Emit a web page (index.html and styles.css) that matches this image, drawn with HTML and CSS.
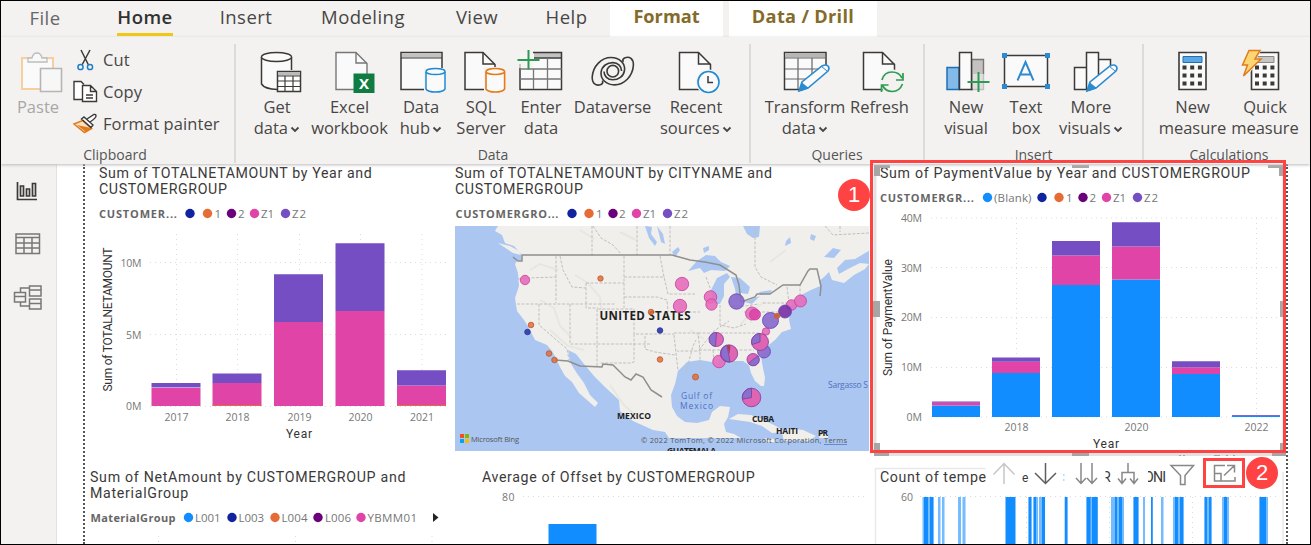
FILE: index.html
```html
<!DOCTYPE html>
<html lang="en">
<head>
<meta charset="utf-8">
<title>Report</title>
<link rel="stylesheet" href="styles.css">
</head>
<body>
<div class="app">
<nav class="tabs">
  <span class="tab t-file">File</span><span class="tab t-home active"><b>Home</b></span><span class="tab t-insert">Insert</span><span class="tab t-model">Modeling</span><span class="tab t-view">View</span><span class="tab t-help">Help</span><span class="tab context t-format">Format</span><span class="tab context t-drill">Data / Drill</span>
</nav>
<div class="ribbon">
  <section class="group g-clip">
    <div class="tools">
      <div class="btn b-paste disabled">
        <svg class="ico" viewBox="16 50 44 44"><path d="M22 58h31v31H22z" fill="#fafafa" stroke="#f5cfa0" stroke-width="2"/><path d="M28 62v-4h4q1-5 5-5t5 5h5v4z" fill="#f8f8f8" stroke="#bdbdbd" stroke-width="1.3"/><path d="M40.500 68.500h21v23h-21z" fill="#f7f7f7" stroke="#b5b5b5" stroke-width="1.600"/></svg>
        <span>Paste</span>
      </div>
      <ul class="mini">
        <li><svg viewBox="73 48 26 24"><path d="M81 51l7.500 15M90 51l-8 15" fill="none" stroke="#3b3a39" stroke-width="1.500"/><circle cx="80.500" cy="68" r="2.600" fill="none" stroke="#1e7fc4" stroke-width="1.500"/><circle cx="90" cy="68" r="2.600" fill="none" stroke="#1e7fc4" stroke-width="1.500"/></svg>Cut</li>
        <li><svg viewBox="73 80 26 24"><path d="M82 100.500h-8v-18h7l3 3" fill="#fff" stroke="#3b3a39" stroke-width="1.400"/><path d="M82.500 86.500h8l6 6v10h-14zM90.500 86.500v6h6M86 96h7M86 99h7" fill="#fff" stroke="#3b3a39" stroke-width="1.400"/></svg>Copy</li>
        <li><svg viewBox="73 112 26 24"><path d="M74 125l8.500-3.500 9 8-7 4z" fill="#fbe0c0" stroke="#e07c1c" stroke-width="1.500"/><path d="M77 126l9 7 5-4" fill="#e07c1c"/><path d="M81.500 120l2.500-2 9 8-2 2.500zM87 120l7-4.500q2-.5 2 1.500t-6 6" fill="#fff" stroke="#3b3a39" stroke-width="1.400"/></svg>Format painter</li>
      </ul>
    </div>
    <div class="caption">Clipboard</div>
  </section>
  <section class="group g-data">
    <div class="tools">
      <div class="btn w72"><svg class="ico" viewBox="255 50 44 44"><path d="M262 57v27q3 5 16 5h13V57z" fill="#fafafa"/><path d="M261.500 57v27q3 5 16 5.500M291.500 57v13" fill="none" stroke="#3b3a39" stroke-width="1.500"/><ellipse cx="276.500" cy="57" rx="15" ry="4.500" fill="#fafafa" stroke="#3b3a39" stroke-width="1.500"/><path d="M277.500 71.500h23v20h-23z" fill="#fff" stroke="#3b3a39" stroke-width="1.500"/><path d="M278 72h22v3.500h-22z" fill="#bbb"/><path d="M278 76h23M278 81h23M278 86.500h23M285 76v15M293 76v15" stroke="#3b3a39" stroke-width="1.200"/></svg><span>Get<br>data <svg class="chev" viewBox="0 0 10 7"><path d="M1.500 1.500L5 5l3.500-3.500"/></svg></span></div>
      <div class="btn w73"><svg class="ico" viewBox="327.500 50 44 44"><path d="M335.500 52.500h20l11 11v26h-31z" fill="#fafafa" stroke="#777" stroke-width="1.400"/><path d="M355.500 52.500v10.500h11" fill="none" stroke="#777" stroke-width="1.400"/><path d="M353 73.500h21v19.500h-21z" fill="#107c41"/><text x="363.500" y="88.500" text-anchor="middle" class="xl">X</text></svg><span>Excel<br>workbook</span></div>
      <div class="btn w70"><svg class="ico" viewBox="399 50 44 44"><path d="M401 52.500h41v37h-41z" fill="#fafafa" stroke="#3b3a39" stroke-width="1.500"/><path d="M402 53.500h39v4h-39z" fill="#c4c2c0"/><path d="M401 58h41" stroke="#3b3a39" stroke-width="1.200"/><path d="M424 68h23v25h-23z" fill="#f3f2f1"/><path d="M426 72v17q2 3 9.500 3t9.500-3V72" fill="#fafafa" stroke="#1e8ad6" stroke-width="1.500"/><ellipse cx="435.500" cy="71.500" rx="9.500" ry="3" fill="#fafafa" stroke="#1e8ad6" stroke-width="1.500"/></svg><span>Data<br>hub <svg class="chev" viewBox="0 0 10 7"><path d="M1.500 1.500L5 5l3.500-3.500"/></svg></span></div>
      <div class="btn w50"><svg class="ico" viewBox="459 50 44 44"><path d="M465 52.500h18l12 12v25h-30z" fill="#fafafa" stroke="#3b3a39" stroke-width="1.500"/><path d="M483 52.500V64h12" fill="none" stroke="#3b3a39" stroke-width="1.500"/><path d="M484 67h23v26h-23z" fill="#f3f2f1"/><path d="M486 72v17q2 3 9.300 3t9.300-3V72" fill="#fafafa" stroke="#e67a17" stroke-width="1.600"/><ellipse cx="495.300" cy="71.500" rx="9.300" ry="3" fill="#fafafa" stroke="#e67a17" stroke-width="1.600"/></svg><span>SQL<br>Server</span></div>
      <div class="btn w70"><svg class="ico" viewBox="519 50 44 44"><path d="M520 52.500h41.500v37H520z" fill="#fafafa"/><path d="M534 53h27v4.500h-27z" fill="#c4c2c0"/><path d="M533 52.500h28.500v37H520V64M534 58h27" fill="none" stroke="#3b3a39" stroke-width="1.500"/><path d="M520 69h41.500M520 79h41.500M533.500 69v20M547.500 58v31" stroke="#777" stroke-width="1.300"/><path d="M516 49h17v19h-17z" fill="#f3f2f1" opacity=".7"/><path d="M528.500 50v19.500M517.500 60h22" stroke="#2d9b52" stroke-width="2"/></svg><span>Enter<br>data</span></div>
      <div class="btn w73"><svg class="ico" viewBox="590.500 50 44 44"><g fill="none" stroke="#3b3a39" stroke-width="1.600"><path id="swirl" d="M602 80.500Q603 83.500 600.500 84.500C595.500 86.500 591.500 83.500 591.700 77 592.500 66 601 57.500 610.500 57.500 619 57.500 625 63.500 624 70.500 623 76.500 618 79.800 612.300 79.800 607 79.800 603.500 76 603.500 71.500"/><use href="#swirl" transform="rotate(180 612.300 71.200)"/><circle cx="612.300" cy="71.200" r="5.800"/></g></svg><span>Dataverse</span></div>
      <div class="btn w94"><svg class="ico" viewBox="674 50 44 44"><path d="M679.500 52.500h19l12 12v25h-31z" fill="#fafafa" stroke="#3b3a39" stroke-width="1.500"/><path d="M698.500 52.500V64h12" fill="none" stroke="#3b3a39" stroke-width="1.500"/><circle cx="708.500" cy="82" r="12.500" fill="#f3f2f1"/><circle cx="708.500" cy="82" r="10.500" fill="#fafafa" stroke="#1e8ad6" stroke-width="1.600"/><path d="M708 76v6.500h5" fill="none" stroke="#3b3a39" stroke-width="1.500"/></svg><span>Recent<br>sources <svg class="chev" viewBox="0 0 10 7"><path d="M1.500 1.500L5 5l3.500-3.500"/></svg></span></div>
    </div>
    <div class="caption">Data</div>
  </section>
  <section class="group g-query">
    <div class="tools">
      <div class="btn w80"><svg class="ico" viewBox="783 50 44 44"><path d="M784.500 52.500h41.500v37h-41.500z" fill="#fafafa" stroke="#3b3a39" stroke-width="1.500"/><path d="M785 53h40v4.500h-40z" fill="#b8b6b4"/><path d="M785 58h41M785 69h41M785 79h41M798 58v31M812 58v31" stroke="#666" stroke-width="1.200"/><path d="M801 93l30-32v30z" fill="#f3f2f1"/><path d="M799 91l3-9 20-16q4-2 6 0t0 5l-20 17z" fill="#fafafa" stroke="#2c8ad0" stroke-width="1.600"/><path d="M799 91l3-8 6 5zM821 66l6 5" fill="#2c8ad0" stroke="#2c8ad0"/></svg><span>Transform<br>data <svg class="chev" viewBox="0 0 10 7"><path d="M1.500 1.500L5 5l3.500-3.500"/></svg></span></div>
      <div class="btn w69"><svg class="ico" viewBox="857.500 50 44 44"><path d="M863 52.500h19l12 12v25h-31z" fill="#fafafa" stroke="#3b3a39" stroke-width="1.500"/><path d="M882 52.500V64h12" fill="none" stroke="#3b3a39" stroke-width="1.500"/><circle cx="892" cy="82" r="12.500" fill="#f3f2f1"/><path d="M881.500 80q2-8 10-8 7 0 10 6M902.500 73v7h-7M902 84q-3 7.500-10 7.500-7 0-10-6M881 92v-7h7" fill="none" stroke="#2d9b52" stroke-width="1.700"/></svg><span>Refresh</span></div>
    </div>
    <div class="caption">Queries</div>
  </section>
  <section class="group g-insert">
    <div class="tools">
      <div class="btn w60"><svg class="ico" viewBox="944 50 44 44"><path d="M971.500 59.500h12v30h-12z" fill="#c4c2c0" stroke="#777" stroke-width="1.400"/><path d="M947 67.500h12v22h-12z" fill="#82baea" stroke="#1e70b5" stroke-width="1.500"/><path d="M959.500 52.500h12v37h-12z" fill="#fafafa" stroke="#3b3a39" stroke-width="1.500"/><path d="M973 74h14v17h-14z" fill="#f3f2f1" opacity=".6"/><path d="M978.500 72v20M967.500 82h22" stroke="#2d9b52" stroke-width="2"/></svg><span>New<br>visual</span></div>
      <div class="btn w60"><svg class="ico" viewBox="1004 50 44 44"><path d="M1004.500 55.500h43v31h-43z" fill="#fafafa" stroke="#3b3a39" stroke-width="1.500"/><path d="M1002 53h5v5h-5zM1045 53h5v5h-5zM1002 84h5v5h-5zM1045 84h5v5h-5z" fill="#2c8ad0"/><path d="M1017.500 80.500L1025.500 62l8 18.500M1020 74.500h11" fill="none" stroke="#2c8ad0" stroke-width="1.900"/></svg><span>Text<br>box</span></div>
      <div class="btn w70"><svg class="ico" viewBox="1069 50 44 44"><path d="M1074.500 67.500h12v22h-12zM1098.500 59.500h12v30h-12zM1086.500 52.500h12v37h-12z" fill="#fafafa" stroke="#3b3a39" stroke-width="1.500"/><path d="M1088 94l26-30v28z" fill="#f3f2f1"/><path d="M1087 91l3-9 20-16q4-2 6 0t0 5l-20 17z" fill="#fafafa" stroke="#2c8ad0" stroke-width="1.600"/><path d="M1087 91l3-8 6 5zM1109 66l6 5" fill="#2c8ad0" stroke="#2c8ad0"/></svg><span>More<br>visuals <svg class="chev" viewBox="0 0 10 7"><path d="M1.500 1.500L5 5l3.500-3.500"/></svg></span></div>
    </div>
    <div class="caption">Insert</div>
  </section>
  <section class="group g-calc">
    <div class="tools">
      <div class="btn w73"><svg class="ico" viewBox="1170.500 50 44 44"><path d="M1178.500 52.500h27v37h-27z" fill="#fafafa" stroke="#3b3a39" stroke-width="1.600"/><path d="M1182.500 56.500h19v6h-19z" fill="#5ba7e6" stroke="#1e70b5"/><path d="M1182 67.500h19.500M1182 75.500h19.500M1182 83.500h19.500" stroke="#3b3a39" stroke-width="4" stroke-dasharray="4 3.700"/></svg><span>New<br>measure</span></div>
      <div class="btn w72"><svg class="ico" viewBox="1243 50 44 44"><path d="M1251.500 52.500h27v37h-27z" fill="#fafafa" stroke="#3b3a39" stroke-width="1.600"/><path d="M1256 56.500h18v6h-18z" fill="#c8c6c4" stroke="#888"/><path d="M1255 67.500h19.500M1255 75.500h19.500M1255 83.500h19.500" stroke="#3b3a39" stroke-width="4" stroke-dasharray="4 3.700"/><path d="M1240 49h22l-5 9h4l-13 17h-8z" fill="#f3f2f1"/><path d="M1249 50.500h11l-5 8.500h6L1243.500 76l4-11h-5z" fill="#fcd575" stroke="#e07c1c" stroke-width="1.500"/></svg><span>Quick<br>measure</span></div>
    </div>
    <div class="caption">Calculations</div>
  </section>
</div>
<div class="work">
  <aside class="rail">
    <svg viewBox="14 180 28 20"><path d="M17.500 182v17.500H37M20.500 186h3v10h-3zM26.500 189h3v7h-3zM32.500 183.500h3v12.500h-3z" fill="none" stroke="#3b3a39" stroke-width="1.700"/></svg>
    <svg viewBox="14 232 28 22"><path d="M16 234h23.500v19.500H16zM16 237.500h23.500M16 243h23.500M16 248h23.500M24 237v16M32 237v16" fill="none" stroke="#777" stroke-width="1.500"/></svg>
    <svg viewBox="14 284 28 28"><path d="M14.500 292.500h11v9.500h-11zM14.500 296.500h11M29.500 286h11.500v10H29.500zM29.500 290h11.500M29.500 299h11.500v10H29.500zM29.500 303.500h11.500M20.500 292v-4h9M20.500 302v4h9" fill="none" stroke="#777" stroke-width="1.500"/></svg>
  </aside>
  <main class="page">
    <div class="row top">
      <article class="card c1">
        <h2>Sum of TOTALNETAMOUNT by Year and<br>CUSTOMERGROUP</h2>
        <svg class="chart" viewBox="99 198 350 244">
          <g class="legend"><text x="99" y="217.500" textLength="78" class="lb">CUSTOMER...</text><circle cx="190" cy="213.500" r="4.700" fill="#12239e"/><circle cx="207.500" cy="213.500" r="4.700" fill="#e66c37"/><text x="214.500" y="217.500">1</text><circle cx="231.500" cy="213.500" r="4.700" fill="#6b007b"/><text x="238" y="217.500">2</text><circle cx="254.500" cy="213.500" r="4.700" fill="#e044a7"/><text x="261" y="217.500" textLength="13">Z1</text><circle cx="285.500" cy="213.500" r="4.700" fill="#744ec2"/><text x="292" y="217.500" textLength="14">Z2</text></g>
          <path class="grid" d="M150 262.500h298M150 334.500h298M150 406.500h298M176.500 234v172M237.500 234v172M299.500 234v172M360.500 234v172M422 234v172"/>
          <g fill="#e044a7"><path d="M151.500 388h49v18h-49zM212.500 383h49v23h-49zM274 322h49v84h-49zM335.500 311h49v95h-49zM397 385.500h49v20.500h-49z"/></g>
          <g fill="#744ec2"><path d="M151.500 383h49v4.500h-49zM212.500 373.500h49v9.500h-49zM274 274.300h49v47.700h-49zM335.500 243.300h49v67.700h-49zM397 370.300h49v15.200h-49z"/></g>
          <path d="M212.500 405.500h49M397 405.500h49" stroke="#e66c37"/>
          <g class="ax"><text x="120.500" y="266.500" textLength="21">10M</text><text x="126" y="338.500" textLength="15.500">5M</text><text x="126" y="410" textLength="15.500">0M</text><g text-anchor="middle"><text x="176.500" y="420.500" textLength="24">2017</text><text x="237.500" y="420.500" textLength="24">2018</text><text x="299.500" y="420.500" textLength="24">2019</text><text x="360.500" y="420.500" textLength="24">2020</text><text x="422" y="420.500" textLength="24">2021</text></g></g>
          <text class="at" x="286" y="437.500" textLength="26">Year</text>
          <text class="at" transform="translate(111.500 391.500) rotate(-90)" textLength="144">Sum of TOTALNETAMOUNT</text>
        </svg>
      </article>
      <article class="card c2">
        <h2>Sum of TOTALNETAMOUNT by CITYNAME and<br>CUSTOMERGROUP</h2>
        <svg class="chart" viewBox="455 198 414 253">
          <g class="legend"><text x="455.500" y="217.500" textLength="103" class="lb">CUSTOMERGRO...</text><circle cx="572" cy="213.500" r="4.700" fill="#12239e"/><circle cx="589" cy="213.500" r="4.700" fill="#e66c37"/><text x="596" y="217.500">1</text><circle cx="613" cy="213.500" r="4.700" fill="#6b007b"/><text x="619" y="217.500">2</text><circle cx="636.500" cy="213.500" r="4.700" fill="#e044a7"/><text x="643" y="217.500" textLength="13">Z1</text><circle cx="667.500" cy="213.500" r="4.700" fill="#744ec2"/><text x="674" y="217.500" textLength="14">Z2</text></g>
          <svg x="455" y="226" width="414" height="225" viewBox="455 226 414 225">
            <path d="M455 226h414v225H455z" fill="#abc7f1"/>
            <g fill="#f0efeb">
              <path d="M498 226l-3 5 7 4 3 8 9 3 7 8 1 6-5 1-2 3 3 9 1 13-4 12 2 13 7 9 5 8 6 12 12 5 5 6 4 7 4 9 5 9 7 6 7 11 8 7 8 7 3-4-8-8-6-12-8-11-6-10-2-12 8 4 8 10 10 12 11 11 14 13 1 11 13 10 20 9 12 2 4 6h72l-7-4-8-2-2-8 4-7 2-10-10-1-8 6-3 8-12 3-12-1-8-6-5-9-1-12 4-11 3-13 9-9 13-2 12 2 6 3 1-5 6-2 9 3h9l6 4 2 8 4 8 6 5h3l1-8-2-10-2-11 4-9 10-8 7-8 9-3-2-9 2-14 10-11 10-5 9-4-1-5 5-4 5-5 3 8 12 3 10-8 11-6 4-5-9-1-12 6-9 5-2-6 8-8 10-1 17-10 22-10 9-5v-8z"/>
              <path d="M498 243l12 3 9 5 2 4-8-2z"/>
              <path d="M729 419l9-5 13 1 11 4 12 6 12 7-14 1-10-7-12-4-14-2zM782 433l7-5 14 2 13 6-8 5-12-1-12 1zM820 434h8v4h-9zM765 438l9 1 2 3h-9z"/>
            </g>
            <g fill="#abc7f1"><path d="M688 271l9-10 9-6 9 1 6 6 9 4-5 5-14-1-7 3-4-5zM714 304l-3-14 6-12 10-5 3 4-6 7v12l-4 8zM731 277l9 1 10 9-2 7-8-1-3 8-2-12zM744 302l16-6-8 8zM759 292l13-2-2 4-10 1zM743 226h17l-1 11-6 1-6-4zM645 226l7 1-1 7 6 8-2 4-6-8zM657 226l6 8 2 10-4-2zM672 252l6-5 2 3-5 7zM703 248l6-2v4l-5 3zM786 241l4-4 1 6-6 3zM811 234l5 2-2 5-4-2zM824 257l9-9 8 2-7 8z"/></g>
            <g fill="none" stroke="#e8e6e1" stroke-width="2"><path d="M540 300l14 8 6 18 12 12M575 275l13 8 12 14 2 17M550 330l18 16 16 4M530 270l10-6 18 6M610 385l14 20 16 14M580 230l14 9M620 232l16 8M690 330l14 9M740 325l14-15 10-8M770 262l16-12"/></g>
            <path class="state" d="M518 279l10-1 28-1v26M517 304h99M539 304v21l28 24 2 11M556 256v21M560 256l3 14 9 17 14 1M586 283h38M586 283v25h12M570 304v40h81M598 309h36M624 256v52M597 309v57M624 277h41M624 297h33l10 3 1 12M634 309v25h40M634 334v28l-4 1h-30M645 336v13l10 3 20 3M660 256l4 21 4 17h27M675 312h25M674 333h24l2 18h-23M674 335l4 36M686 372l7-26 3-6M593 226l8 12 12 7 9 10M592 226v30M637 226v29M670 226v28M755 228v39l6 10 16 8M700 352v22M713 350l2 22M728 349l7 17M698 333h65M699 350h55M699 350l15-19 15-10M720 305v20l14 3 12-4M732 306h13l14-2M744 312h37M751 300v23M763 303h23l4 13M787 287l2 16 8-4M800 284v17M706 277l6 16M825 226l8 9 36-2M840 226v6"/>
            <path d="M513 257l5 4h4v-6h150l18 5 15 2 15 3 16 10 3 10 2 17 14-5 2-3h13l13-9h17l8-14 2-2h7l4 17-1 10M555 360l13 1 12 5 22 1 1-3 10 1 12 12 6 3 5-6 7 3 8 13 11 7" fill="none" stroke="#8f8f8f" stroke-width="1.500"/>
            <g class="city"><text x="599.500" y="319.500" textLength="91" class="us">UNITED STATES</text><text x="617" y="418.500" textLength="34">MEXICO</text><text x="752" y="421.500" textLength="22">CUBA</text><text x="776" y="434" textLength="22">HAITI</text><text x="818" y="435.500" textLength="10">PR</text><text x="667" y="454" textLength="49">GUATEMALA</text></g>
            <g class="sea"><text x="681" y="398.500" textLength="31">Gulf of</text><text x="680" y="409" textLength="33">Mexico</text><text x="828" y="387.500" textLength="40">Sargasso S</text></g>
            <g fill="#e66c37" fill-opacity=".85" stroke="#b85a30" stroke-width=".8"><circle cx="600.500" cy="278.500" r="2.700"/><circle cx="531" cy="325" r="2.800"/><circle cx="549" cy="353.500" r="2.800"/><circle cx="554.500" cy="360" r="2.800"/><circle cx="651" cy="312" r="2.800"/><circle cx="660" cy="359.500" r="2.800"/><circle cx="695.500" cy="377" r="3"/></g>
            <g fill="#3b46b4" stroke="#2a3390" stroke-width=".8"><circle cx="527.500" cy="332" r="2.800"/><circle cx="660" cy="330.500" r="2.800"/></g>
            <g fill="#e66bbb" fill-opacity=".9" stroke="#c9409a" stroke-width=".8"><circle cx="525" cy="280" r="4.700"/><circle cx="682" cy="284" r="6.700"/><circle cx="680" cy="306" r="6.700"/><circle cx="710.500" cy="297" r="6.300"/><circle cx="711.500" cy="304.500" r="5.700"/><circle cx="752" cy="313.500" r="6.500"/><circle cx="755" cy="314.500" r="5.500" fill="#dc45a8"/><circle cx="791.500" cy="305" r="5.300"/><circle cx="800.500" cy="301" r="6"/><circle cx="766" cy="331.500" r="3.700"/><circle cx="719" cy="361.500" r="6.300"/></g>
            <g fill="#8a6acb" fill-opacity=".92" stroke="#6543b4" stroke-width=".8"><circle cx="736.500" cy="301.500" r="7.700"/><circle cx="770.500" cy="320.500" r="8"/><circle cx="785" cy="311.500" r="6.500" fill="#7933a5"/><circle cx="764" cy="351.500" r="6.500"/></g>
            <circle cx="777" cy="316" r="3" fill="#c9603f"/>
            <g stroke="#813b9c" stroke-width=".8"><g fill="#de65b4"><circle cx="716.500" cy="339.500" r="7"/><circle cx="729" cy="353.500" r="8.700"/><circle cx="760" cy="342" r="8.500"/><circle cx="753" cy="359.500" r="6"/><circle cx="751.500" cy="397.500" r="9.300"/></g><g fill="#8a6fce"><path d="M716.500 332.500a7 7 0 0 0-1 14zM727 345a8.700 8.700 0 0 0 3 17zM760 342v-8.500a8.500 8.500 0 0 0-8 11zM753 359.500l5-3.500a6 6 0 1 1-9.500 7.500zM751.500 397.500v-9.300a9.300 9.300 0 0 0-9 11z"/></g></g>
            <path d="M727 345.500l3.500-.5-1 9z" fill="#a83d4c"/>
            <path d="M460 434h4v4h-4z" fill="#f25022"/><path d="M465 434h4v4h-4z" fill="#7fba00"/><path d="M460 439h4v4h-4z" fill="#00a4ef"/><path d="M465 439h4v4h-4z" fill="#ffb900"/>
            <g class="credit"><text x="471" y="441.500" textLength="48">Microsoft Bing</text><text x="641" y="443" textLength="206">© 2022 TomTom, © 2022 Microsoft Corporation, Terms</text></g><path d="M824 444.500h23" stroke="#6688cc"/>
          </svg>
        </svg>
      </article>
      <article class="card c3">
        <h2>Sum of PaymentValue by Year and CUSTOMERGROUP</h2>
        <svg class="chart" viewBox="873 182 412 270">
          <g class="legend"><text x="880" y="202" textLength="94" class="lb">CUSTOMERGR...</text><circle cx="987.500" cy="197.500" r="4.700" fill="#118dff"/><text x="994" y="202" textLength="37.500">(Blank)</text><circle cx="1042" cy="197.500" r="4.700" fill="#12239e"/><circle cx="1059" cy="197.500" r="4.700" fill="#e66c37"/><text x="1066" y="202">1</text><circle cx="1083" cy="197.500" r="4.700" fill="#6b007b"/><text x="1089.500" y="202">2</text><circle cx="1106.500" cy="197.500" r="4.700" fill="#e044a7"/><text x="1113" y="202" textLength="13">Z1</text><circle cx="1137.500" cy="197.500" r="4.700" fill="#744ec2"/><text x="1144" y="202" textLength="14">Z2</text></g>
          <path class="grid" d="M931 218h348M931 267.500h348M931 317.500h348M931 367.500h348M931 417h348M1016.500 218v199M1136.500 218v199M1256.500 218v199"/>
          <path fill="#118dff" d="M932 405.500h48V417h-48zM992 373h48v44h-48zM1052 285h48v132h-48zM1112 279.500h48V417h-48zM1172 374h48v43h-48zM1232 415.500h48v1.500h-48z"/>
          <path fill="#e044a7" d="M932 402.300h48v3.200h-48zM992 361.800h48V373h-48zM1052 255.500h48V285h-48zM1112 246.500h48v33h-48zM1172 367.300h48v6.700h-48z"/>
          <path fill="#744ec2" d="M932 401.500h48v1h-48zM992 357.500h48v4.300h-48zM1052 241h48v14.500h-48zM1112 222.300h48v24.200h-48zM1172 361.300h48v6h-48zM1232 415h48v.8h-48z"/>
          <g class="ax"><text x="901" y="221.500" textLength="21">40M</text><text x="901" y="271.500" textLength="21">30M</text><text x="901" y="321" textLength="21">20M</text><text x="901" y="371" textLength="21">10M</text><text x="906.500" y="420.500" textLength="15.500">0M</text><g text-anchor="middle"><text x="1016.500" y="431" textLength="24">2018</text><text x="1136.500" y="431" textLength="24">2020</text><text x="1256.500" y="431" textLength="24">2022</text></g></g>
          <text class="at" x="1093" y="448" textLength="26">Year</text>
          <text class="at" transform="translate(892 376) rotate(-90)" textLength="117">Sum of PaymentValue</text>
        </svg>
      </article>
    </div>
    <div class="row bottom">
      <article class="card c4">
        <h2>Sum of NetAmount by CUSTOMERGROUP and<br>MaterialGroup</h2>
        <svg class="chart" viewBox="90 501 380 43">
          <g class="legend"><text x="90.500" y="522" textLength="85" class="lb">MaterialGroup</text><circle cx="188.500" cy="517.500" r="4.700" fill="#118dff"/><text x="195" y="522" textLength="25.500">L001</text><circle cx="232" cy="517.500" r="4.700" fill="#12239e"/><text x="238.500" y="522" textLength="25.500">L003</text><circle cx="275" cy="517.500" r="4.700" fill="#e66c37"/><text x="281.500" y="522" textLength="26">L004</text><circle cx="318" cy="517.500" r="4.700" fill="#6b007b"/><text x="325" y="522" textLength="26">L006</text><circle cx="361" cy="517.500" r="4.700" fill="#e044a7"/><text x="367.500" y="522" textLength="49.500">YBMM01</text></g>
          <path d="M433 513l5.500 4.500-5.500 4.500z" fill="#252423"/><path class="grid" d="M158.500 536v8M295.500 536v8M432 536v8"/>
        </svg>
      </article>
      <article class="card c5">
        <h2>Average of Offset by CUSTOMERGROUP</h2>
        <svg class="chart" viewBox="482 485 385 59"><text class="ax" x="502" y="501" textLength="12.500">80</text><path class="grid" d="M523 496.500h344"/><path d="M548.500 524h48v20h-48z" fill="#118dff"/></svg>
      </article>
      <article class="card c6">
        <svg class="chart" viewBox="874 453 412 91">
          <path d="M1283 472v72M875.500 544v-75.500h110" fill="none" stroke="#e9e9e9" stroke-width="1.500"/>
          <g class="tt"><text x="880" y="481.500" textLength="106">Count of tempe</text><text x="1022" y="481.500" font-size="12">e</text><text x="1102" y="481.500">R</text><text x="1144" y="481.500" textLength="22">ONI</text></g>
          <path d="M1095 468h10.500v17h-10.500zM1140 468h8v17h-8z" fill="#fff"/><path d="M1063 474h1.500v2h-1.500zM1063 479h1.500v2h-1.500z" fill="#b5dbff"/>
          <text class="ax" x="901" y="501" textLength="12">60</text>
          <path class="grid" d="M920 496.500h360M1026.500 497v47M1109.500 497v47M1192.500 497v47"/>
          <g fill="#74bcff"><path d="M922.500 497h11.500v47h-11.500zM938 497h2.500v47h-2.500zM942 497h2.500v47h-2.500zM958 497h3v47h-3zM962.500 497h3v47h-3zM1028 497h17v47h-17zM1064.500 497h3.500v47h-3.500zM1086 497h12v47h-12zM1111 497h13v47h-13zM1133 497h6v47h-6zM1143 497h2v47h-2zM1151 497h2v47h-2zM1161 497h2.500v47h-2.500zM1173 497h11v47h-11zM1204 497h8v47h-8zM1222 497h7v47h-7zM1259 497h9v47h-9z"/></g>
          <g fill="#118dff"><path d="M924 497h4v47h-4zM930 497h3v47h-3zM1005.500 497h10v47h-10zM1029 497h2v47h-2zM1034 497h2v47h-2zM1042 497h3v47h-3zM1065 497h2v47h-2zM1087 497h3.500v47h-3.500zM1092 497h5.500v47h-5.500zM1115 497h2v47h-2zM1119 497h3v47h-3zM1134 497h4v47h-4zM1151 497h1.500v47h-1.500zM1175 497h3v47h-3zM1180 497h3v47h-3zM1205 497h2v47h-2zM1209 497h2v47h-2zM1224 497h3v47h-3zM1260 497h6v47h-6z"/></g>
          <path d="M1038 497h1v47h-1zM1032 497h1v47h-1z" fill="#fff"/>
          <g fill="none" stroke="#8a8886" stroke-width="1.500"><path d="M1004 484v-20M993.500 474.500l10.500-11 10.500 11" stroke="#c8c6c4"/><path d="M1045.500 463v20M1035 473l10.500 10.500 10.500-10.500" stroke="#605e5c"/><path d="M1081 463v20M1076 478l5 5.500 5-5.500M1092 463v20M1087 478l5 5.500 5-5.500M1128 463v9.500M1122 483v-10.500h12V483M1118 478.500l4 5 4-5M1130 478.500l4 5 4-5"/><path d="M1171 465.500h22.500l-8.500 10v9h-4.500v-9zM1225 465.500h-10.500v15.500h20.500v-4M1214.500 473.500h6.500v7.500M1224 475.500l10-9.500M1227 465.500h7.500v7"/></g>
        </svg>
      </article>
    </div>
    <svg class="handles" viewBox="870 159 418 300"><path d="M875 168v284M874 454.500h411M1284 168v284" stroke="#e2e2e2" stroke-width="3"/><path d="M874 165h16v3h-10v8h-6zM1072 165h17v3h-17zM1268 165h15v11h-4v-8h-11zM873 301h7v16h-7zM1280 301h4v16h-4zM874 443h6v8h-6zM1280 443h4v8h-4zM874 453h15v3h-15zM1072 453h17v3h-17zM1272 453h14v3h-14zM1179 455h2v1h-2zM1183 455h2v1h-2zM1214 455h6v1h-6zM1226 455h2v1h-2zM1233 455h2v1h-2z" fill="#a6a6a6"/></svg>
  </main>
</div>
<div class="mark box-one"></div><div class="mark box-two"></div>
<div class="badge one">1</div><div class="badge two">2</div>
</div>
</body>
</html>
```

FILE: styles.css
```css
* { box-sizing: border-box; }
body { margin: 0; font-family: "Open Sans", sans-serif; color: #484644; }
.app { position: relative; width: 1311px; height: 545px; border: 1px solid #000; background: #f3f2f1; overflow: hidden; display: flex; flex-direction: column; }
.tabs { display: flex; height: 36px; flex: none; font-size: 18.500px; letter-spacing: .45px; color: #484644; }
.tab { display: flex; justify-content: center; line-height: 31px; height: 36px; white-space: nowrap; }
.t-file { width: 88px; color: #666; line-height: 33px; }
.t-home { width: 112px; }
.t-home b { border-bottom: 3px solid #f2c811; height: 35px; font-weight: 600; color: #323130; letter-spacing: .5px; }
.t-insert { width: 90px; }
.t-model { width: 144px; }
.t-view { width: 84px; }
.t-help { width: 91px; padding-left: 4px; }
.context { background: #fff; color: #846b2a; font-weight: 700; letter-spacing: 0; font-size: 18.200px; }
.t-format { width: 113px; margin-right: 6px; }
.t-drill { width: 148px; letter-spacing: .3px; }
.ribbon { display: flex; height: 127px; flex: none; font-size: 16.500px; position: relative; z-index: 2; box-shadow: 0 1px 3px #bbb; background: #f3f2f1; }
.group { position: relative; border-right: 2px solid #dddbda; margin: 7px 0 2px; display: flex; flex-direction: column; height: 119px; }
.g-clip { width: 235px; }
.g-data { width: 515px; padding-left: 5px; }
.g-query { width: 174px; padding-left: 14px; }
.g-insert { width: 219px; padding-left: 11px; }
.g-calc { width: 166px; padding-left: 12px; border-right: 0; }
.tools { display: flex; height: 103px; padding-top: 6px; }
.btn { display: flex; flex-direction: column; align-items: center; text-align: center; line-height: 21.500px; flex: none; white-space: nowrap; }
.btn > span { margin-top: 1.500px; }
.ico { width: 44px; height: 44px; overflow: visible; flex: none; }
.w50 { width: 50px; } .w60 { width: 60px; } .w69 { width: 69px; } .w70 { width: 70px; } .w72 { width: 72px; } .w73 { width: 73px; } .w80 { width: 80px; } .w94 { width: 94px; }
.b-paste { width: 44px; margin-left: 15px; }
.disabled { color: #a9a7a5; }
.mini { list-style: none; margin: -7px 0 0 13px; padding: 0; }
.mini li { display: flex; align-items: center; height: 32px; gap: 4px; white-space: nowrap; letter-spacing: .1px; }
.mini svg { width: 26px; height: 24px; overflow: visible; }
.chev { width: 10px; height: 7px; margin-left: -2px; vertical-align: 1px; fill: none; stroke: #484644; stroke-width: 1.800; }
.caption { font-size: 14px; line-height: 16px; text-align: center; color: #555; }
.g-clip .caption { margin-left: -5px; }
.g-data .caption { margin-left: -4px; }
.g-query .caption { margin-left: -14px; }
.g-insert .caption { margin-left: -11px; }
.g-calc .caption { margin-left: -8px; }
.xl { font: 700 15px "Open Sans", sans-serif; fill: #fff; }
.work { display: flex; height: 380px; background: #fff; }
.rail { width: 56px; background: #f3f2f1; border-right: 1px solid #e3e1df; display: flex; flex-direction: column; padding: 16px 0 0 13px; flex: none; }
.rail svg { width: 28px; margin-bottom: 32px; overflow: visible; }
.rail svg:nth-child(2) { margin-bottom: 30px; }
.page { position: relative; width: 1205px; margin-left: 26px; border-left: 2px dotted #555; border-right: 2px dotted #555; }
.row { display: flex; }
.top { height: 289px; padding: 1px 0 0 14px; }
.bottom { height: 91px; padding: 0 0 0 5px; }
h2 { font: 400 14.200px/16px Roboto, sans-serif; letter-spacing: .62px; margin: 0; color: #3b3a39; white-space: nowrap; }
.card { flex: none; }
.chart { display: block; overflow: hidden; }
.c1 { width: 350px; margin-right: 6px; }
.c2 { width: 414px; margin-right: 4px; }
.c3 { width: 412px; }
.c3 h2 { padding-left: 7px; letter-spacing: .67px; }
.c1 .chart { height: 244px; margin-top: 1px; } .c2 .chart { height: 253px; margin-top: 1px; } .c3 .chart { height: 270px; margin-top: 1px; }
.c4 { width: 380px; margin-right: 12px; padding-top: 16px; }
.c4 h2 { letter-spacing: .7px; }
.c4 .chart { height: 43px; }
.c5 { width: 385px; margin-right: 7px; padding-top: 16px; }
.c5 .chart { height: 59px; }
.c6 { width: 412px; }
.legend { font-size: 11.500px; fill: #777; }
.lb { font-weight: 700; fill: #666; font-size: 11px; }
.ax { font-size: 10.500px; fill: #777; }
.at { font: 400 12px Roboto, sans-serif; fill: #333; }
.tt { font: 14.200px Roboto, sans-serif; fill: #3b3a39; }
.grid { fill: none; stroke: #dcdcdc; stroke-width: 1; stroke-dasharray: 1 4; }
.state { fill: none; stroke: #c2c0bd; stroke-width: 1; stroke-dasharray: 3 1.500; }
.city { font-size: 8.500px; font-weight: 700; fill: #222; }
.us { font-size: 11.500px; }
.sea { font-size: 8.500px; fill: #5070c0; }
.credit { font-size: 7.500px; fill: #555; }
.handles { position: absolute; left: 785px; top: -5px; width: 418px; height: 300px; }
.mark { position: absolute; border: 3px solid #ff4343; z-index: 3; }
.box-one { left: 869px; top: 159px; width: 416px; height: 293px; }
.box-two { left: 1202px; top: 457px; width: 42px; height: 30px; }
.badge { position: absolute; z-index: 4; width: 32px; height: 32px; border-radius: 50%; background: #ff4343; color: #fff; font: 22px/32px "Liberation Sans", sans-serif; text-align: center; }
.one { left: 837px; top: 178px; }
.two { left: 1245px; top: 456px; }
```
